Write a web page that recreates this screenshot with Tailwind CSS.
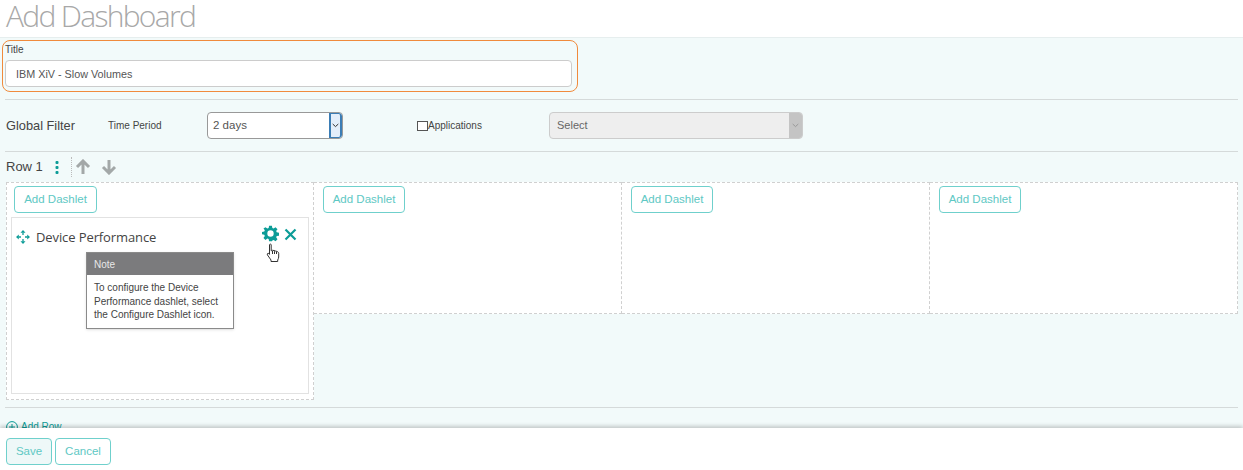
<!DOCTYPE html>
<html lang="en">

<head>
    <meta charset="UTF-8">
    <title>Add Dashboard</title>
    <script src="https://cdn.jsdelivr.net/npm/@tailwindcss/browser@4"></script>
</head>

<body class="bg-white font-['Liberation_Sans',Arial,sans-serif] text-[#555]">
    <div class="relative h-[470px] w-[1243px] overflow-hidden flex flex-col">
        <h1 class="h-[38px] shrink-0 pl-[6px] font-['Open_Sans',sans-serif] font-light text-[30px] leading-[32px] tracking-[-1.7px] text-[#a8a8a8] border-b border-[#e6eeee]">Add Dashboard</h1>

        <div class="h-[390px] shrink-0 overflow-hidden bg-[#f2fafa] px-[5px]">
            <!-- title -->
            <div class="relative h-[62px] border-b border-[#d5dada]">
                <label class="absolute left-0 top-[7px] text-[10px] leading-[10px] text-[#444]">Title</label>
                <input type="text" value="IBM XiV - Slow Volumes" class="absolute left-0 top-[22px] h-[27px] w-[567px] rounded-[4px] border border-[#ccc] bg-white pl-[10px] text-[10.800px] text-[#555]">
            </div>

            <!-- global filter -->
            <div class="flex items-center h-[52px] border-b border-[#d5dada]">
                <span class="w-[103px] pl-px text-[12.800px] text-[#444]">Global Filter</span>
                <span class="w-[99px] text-[10px] text-[#444]">Time Period</span>
                <div class="flex h-[27px] w-[136px] rounded-[4px] border border-[#999] bg-white overflow-hidden">
                    <span class="flex-1 pl-[5px] text-[11.500px] leading-[25px] text-[#555]">2 days</span>
                    <span class="flex w-[13px] items-center justify-center border-x-2 border-y border-[#3b7db5] rounded-r-[3px] bg-[#e3eefa]">
                        <svg width="7" height="5" viewBox="0 0 7 5" fill="none" stroke="#333" stroke-width="1"><path d="M.7 1l2.800 2.600L6.300 1" /></svg>
                    </span>
                </div>
                <label class="ml-[74px] flex w-[132px] items-center text-[10px] text-[#444]">
                    <span class="h-[10px] w-[11px] border border-[#555] bg-white"></span>Applications
                </label>
                <div class="flex h-[27px] w-[254px] rounded-[4px] border border-[#ccc] bg-[#eeeeee] overflow-hidden">
                    <span class="flex-1 pl-[7px] text-[11px] leading-[25px] text-[#666]">Select</span>
                    <span class="flex w-[13px] items-center justify-center bg-[#c4c4c4]">
                        <svg width="7" height="5" viewBox="0 0 7 5" fill="none" stroke="#999" stroke-width="1"><path d="M.7 1l2.800 2.600L6.300 1" /></svg>
                    </span>
                </div>
            </div>

            <!-- row header -->
            <div class="flex items-center h-[30px] text-[#444]">
                <span class="ml-px text-[13px]">Row 1</span>
                <svg class="ml-[12px]" width="4" height="14" viewBox="0 0 4 14" fill="#0c9c97"><rect x=".5" y="1" width="3" height="3" rx="1" /><rect x=".5" y="6" width="3" height="3" rx="1" /><rect x=".5" y="11" width="3" height="3" rx="1" /></svg>
                <span class="ml-[12px] h-[20px] border-l border-dotted border-[#bbb]"></span>
                <svg class="ml-[3px]" width="16" height="16" viewBox="0 0 16 16" fill="none" stroke="#a3a8a8" stroke-width="3"><path d="M8 15V2M2 8l6-6 6 6" /></svg>
                <svg class="ml-[10px]" width="16" height="16" viewBox="0 0 16 16" fill="none" stroke="#a3a8a8" stroke-width="3"><path d="M8 1v13M2 8l6 6 6-6" /></svg>
            </div>

            <!-- dashlet columns -->
            <div class="flex items-start">
                <div class="h-[218px] w-[308px] ml-px border border-dashed border-[#d0d0d0] bg-white px-[4px] pt-[3px]">
                    <button class="ml-[3px] h-[27px] w-[83px] rounded-[4px] border border-[#6fd0cc] bg-white pt-px text-[11.500px] text-[#5ec8c4]">Add Dashlet</button>
                    <div class="relative mt-[4px] h-[177px] border border-[#e2e2e2]">
                        <div class="flex items-center pt-[10px] pl-[4px]">
                            <svg width="14" height="14" viewBox="0 0 14 14" fill="#0c9c97" stroke="#0c9c97" stroke-width="1.300">
                                <path d="M7 0l2.500 2.800h-5zM7 14l2.500-2.800h-5zM0 7l2.800-2.500v5zM14 7l-2.800-2.500v5z" stroke="none" />
                                <path d="M7 2.500v2.500M7 9v2.500M2.500 7H5M9 7h2.500" />
                            </svg>
                            <span class="ml-[6px] font-['Open_Sans',sans-serif] text-[13px] leading-[18px] tracking-[-0.1px] text-[#444]">Device Performance</span>
                        </div>
                        <svg class="absolute left-[250px] top-[7px]" width="17" height="17" viewBox="0 0 24 24" fill="#0c9c97"><path fill-rule="evenodd" d="M10 1h4l.6 3.100 1.800.8L19.100 3l2.800 2.900-1.900 2.600.8 1.800 3.200.7v4l-3.200.6-.8 1.800 1.900 2.700-2.800 2.800-2.700-1.800-1.800.7L14 23h-4l-.6-3.200-1.800-.7L4.900 21l-2.800-2.800L4 15.500l-.8-1.800L0 13V10l3.200-.7.8-1.800L2.100 4.900 4.900 3l2.700 1.900 1.800-.8zM12 7.500a4.500 4.500 0 1 0 0 9 4.500 4.500 0 0 0 0-9z" /></svg>
                        <svg class="absolute left-[272px] top-[10px]" width="13" height="13" viewBox="0 0 13 13" fill="none" stroke="#0c9c97" stroke-width="2.200"><path d="M1.500 1.500l10 10M11.500 1.500l-10 10" /></svg>

                        <!-- callout -->
                        <div class="absolute left-[74px] top-[34px] w-[148px] border border-[#8a8a8a] bg-white shadow-sm">
                            <div class="h-[22px] bg-[#7b7b7d] pl-[7px] text-[10px] leading-[23px] text-[#e8e8e8]">Note</div>
                            <p class="px-[7px] pt-[6px] pb-[6px] text-[10px] leading-[13.500px] text-[#444]">To configure the Device Performance dashlet, select the Configure Dashlet icon.</p>
                        </div>

                        <!-- cursor -->
                        <svg class="absolute left-[254px] top-[25px]" width="14" height="20" viewBox="0 0 14 20" fill="#fff" stroke="#333" stroke-width="1"><path d="M3.500 1.800c0-1 1.700-1 1.700 0v6l1.300-.5 1.500.2 1.500.5 1.700.5c1 .4 1.500 1 1.500 2v3.500c0 1-.5 2-1 3v1.500H5v-1.500l-3.500-5c-.8-1.300.5-2.300 1.500-1.300l.5.700zM6.500 8v3M8.500 8.200V11M10.500 8.800V11" /></svg>
                    </div>
                </div>
                <div class="h-[132px] w-[308px] border border-l-0 border-dashed border-[#d0d0d0] bg-white pl-[9px] pt-[3px]">
                    <button class="h-[27px] w-[82px] rounded-[4px] border border-[#6fd0cc] bg-white pt-px text-[11.500px] text-[#5ec8c4]">Add Dashlet</button>
                </div>
                <div class="h-[132px] w-[308px] border border-l-0 border-dashed border-[#d0d0d0] bg-white pl-[9px] pt-[3px]">
                    <button class="h-[27px] w-[82px] rounded-[4px] border border-[#6fd0cc] bg-white pt-px text-[11.500px] text-[#5ec8c4]">Add Dashlet</button>
                </div>
                <div class="h-[132px] w-[308px] border border-l-0 border-dashed border-[#d0d0d0] bg-white pl-[9px] pt-[3px]">
                    <button class="h-[27px] w-[82px] rounded-[4px] border border-[#6fd0cc] bg-white pt-px text-[11.500px] text-[#5ec8c4]">Add Dashlet</button>
                </div>
            </div>

            <div class="mt-[7px] border-t border-[#d5dada]"></div>
            <div class="flex items-center pt-[11px] pl-px text-[10px] text-[#0c9c97]">
                <svg width="12" height="12" viewBox="0 0 12 12" fill="none" stroke="#0c9c97"><circle cx="6" cy="6" r="5.400" /><path d="M6 3v6M3 6h6" /></svg>
                <span class="ml-[3px]">Add Row</span>
            </div>
        </div>

        <!-- footer -->
        <div class="relative flex-1 flex gap-[3px] bg-white pl-[6px] pt-[10px] shadow-[0_-2px_4px_rgba(0,0,0,0.2)]">
            <button class="h-[27px] w-[46px] rounded-[4px] border border-[#6fd0cc] bg-[#eef8f8] text-[11.500px] text-[#5ec8c4]">Save</button>
            <button class="h-[27px] w-[56px] rounded-[4px] border border-[#6fd0cc] bg-white text-[11.500px] text-[#5ec8c4]">Cancel</button>
        </div>

        <!-- annotation round the title field -->
        <div class="absolute left-[2px] top-[40px] h-[52px] w-[576px] rounded-[8px] border border-[#f08a3c]"></div>
    </div>
</body>

</html>
